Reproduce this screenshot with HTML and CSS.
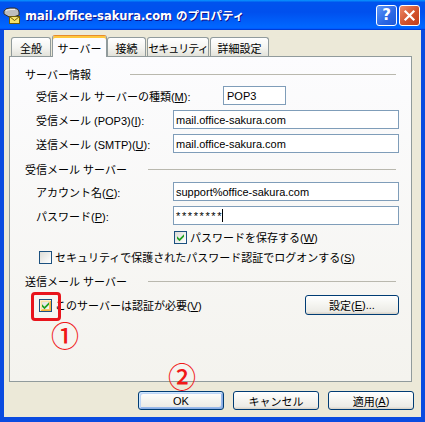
FILE: index.html
```html
<!DOCTYPE html>
<html lang="ja">
<head>
<meta charset="utf-8">
<title>mail.office-sakura.com のプロパティ</title>
<link rel="stylesheet" href="styles.css">
</head>
<body>
<div class="window">
  <div class="titlebar">
    <svg class="app-icon" viewBox="0 0 20 20" width="20" height="20">
      <path d="M1 9 L1 6 Q2 3 7 3 L12 3 Q16 4 16 7 L16 10 L8 13 Z" fill="#BDBDBD" stroke="#2E2E2E" stroke-width="1"/>
      <path d="M3 6 Q4 4.5 8 4.5 L12 4.5" fill="none" stroke="#F2F2F2" stroke-width="1"/>
      <rect x="6.5" y="11.5" width="10" height="7" fill="#F5E36B" stroke="#6B5A0A" stroke-width="1"/>
      <polyline points="6.5,11.5 11.5,15.5 16.5,11.5" fill="none" stroke="#6B5A0A" stroke-width="1"/>
    </svg>
    <span class="title">mail.office-sakura.com のプロパティ</span>
    <div class="tb-buttons">
      <span class="tb-btn help">?</span>
      <span class="tb-btn close">
        <svg viewBox="0 0 13 13" width="13" height="13"><path d="M2.5 2.5 L10.5 10.5 M10.5 2.5 L2.5 10.5" stroke="#fff" stroke-width="2.2" stroke-linecap="square"/></svg>
      </span>
    </div>
  </div>
  <div class="client">
    <div class="tabs">
      <div class="tab t-gen">全般</div>
      <div class="tab active t-srv">サーバー</div>
      <div class="tab t-con">接続</div>
      <div class="tab t-sec">セキュリティ</div>
      <div class="tab t-adv">詳細設定</div>
    </div>
    <div class="panel">
      <div class="group-head"><span class="gh-title w-info">サーバー情報</span><span class="gh-line"></span></div>
      <div class="field-row mt5"><span class="label wide">受信メール サーバーの種類(<u>M</u>):</span><span class="textbox short">POP3</span></div>
      <div class="field-row mt5"><span class="label">受信メール (POP3)(<u>I</u>):</span><span class="textbox">mail.office-sakura.com</span></div>
      <div class="field-row mt5"><span class="label">送信メール (SMTP)(<u>U</u>):</span><span class="textbox">mail.office-sakura.com</span></div>
      <div class="group-head mt9"><span class="gh-title w-sub">受信メール サーバー</span><span class="gh-line"></span></div>
      <div class="field-row mt6"><span class="label">アカウント名(<u>C</u>):</span><span class="textbox">support%office-sakura.com</span></div>
      <div class="field-row mt5"><span class="label">パスワード(<u>P</u>):</span><span class="textbox"><span class="pw">********</span><span class="caret"></span></span></div>
      <div class="check-row far mt5"><span class="checkbox"><svg viewBox="0 0 11 11" width="11" height="11"><path d="M2 4.2 L4.5 6.7 L9 2.2 L9 4.8 L4.5 9.3 L2 6.8 Z" fill="#21A121"/></svg></span><span>パスワードを保存する(<u>W</u>)</span></div>
      <div class="check-row mt6"><span class="checkbox"></span><span>セキュリティで保護されたパスワード認証でログオンする(<u>S</u>)</span></div>
      <div class="group-head mt10"><span class="gh-title w-sub">送信メール サーバー</span><span class="gh-line"></span></div>
      <div class="check-row tall mt7"><span class="checkbox hot"><svg viewBox="0 0 11 11" width="11" height="11"><path d="M2 4.2 L4.5 6.7 L9 2.2 L9 4.8 L4.5 9.3 L2 6.8 Z" fill="#21A121"/></svg></span><span>このサーバーは認証が必要(<u>V</u>)</span><span class="btn btn-settings">設定(<u>E</u>)...</span></div>
    </div>
    <div class="buttons">
      <span class="btn default">OK</span>
      <span class="btn">キャンセル</span>
      <span class="btn">適用(<u>A</u>)</span>
    </div>
  </div>
  <div class="mark-box"></div>
  <span class="mark n1">①</span>
  <span class="mark n2">②</span>
</div>
</body>
</html>
```

FILE: styles.css
```css
* { box-sizing: border-box; }
html, body { margin: 0; padding: 0; }
body {
  font-family: "Liberation Sans", "Noto Sans CJK JP", sans-serif;
  font-size: 11px;
  color: #000;
  background: #fff;
}
u { text-decoration: underline; text-underline-offset: 1px; }

.window {
  position: relative;
  width: 425px;
  height: 422px;
  background: #0A4BE0;
  display: flex;
  flex-direction: column;
  overflow: hidden;
}

.titlebar {
  height: 30px;
  flex: none;
  display: flex;
  align-items: center;
  padding: 0 5px 0 3px;
  background: linear-gradient(180deg, #0997ff, #0053ee 8%, #0050ee 40%, #06f 88%, #06f 93%, #005bff 95%, #003dd7 96%, #003dd7);
}
.app-icon { flex: none; display: block; }
.title {
  flex: 1;
  margin-left: 2px;
  font-family: "DejaVu Sans", "Noto Sans CJK JP", sans-serif;
  font-weight: bold;
  font-size: 11.5px;
  color: #fff;
  text-shadow: 1px 1px #0F1089;
  white-space: nowrap;
}
.tb-buttons { display: flex; gap: 2px; }
.tb-btn {
  width: 21px;
  height: 21px;
  border: 1px solid #fff;
  border-radius: 3px;
  display: flex;
  align-items: center;
  justify-content: center;
}
.help {
  background: linear-gradient(135deg, #5E98F9, #2A66E4 60%, #1F58D8);
  color: #fff;
  font-family: "DejaVu Sans", sans-serif;
  font-weight: bold;
  font-size: 15px;
  line-height: 1;
}
.close { background: linear-gradient(135deg, #EE8A68, #D2532E 55%, #C23C18); }
.close svg { display: block; }

.client {
  flex: 1;
  margin: 0 4px 5px 4px;
  background: #ECE9D8;
  padding: 5px 9px 0 5px;
  display: flex;
  flex-direction: column;
}

.tabs {
  flex: none;
  height: 21px;
  display: flex;
  align-items: flex-end;
  padding-left: 2px;
}
.tab {
  height: 19px;
  border: 1px solid #919B9C;
  border-bottom: none;
  border-radius: 3px 3px 0 0;
  background: linear-gradient(#FFFFFF, #F4F4F0 55%, #E2E2DA);
  display: flex;
  align-items: center;
  justify-content: center;
  white-space: nowrap;
  padding-top: 1px;
  overflow: hidden;
}
.tab.active {
  height: 22px;
  margin-bottom: -1px;
  position: relative;
  z-index: 1;
  background: #FCFCFE;
  border-top: 1px solid #E68B2C;
  box-shadow: inset 0 2px #FFC73C;
  padding-top: 2px;
}
.t-gen { width: 40px; margin-right: 1px; }
.t-srv { width: 55px; }
.t-con { width: 39px; margin-right: 1px; }
.t-sec { width: 62px; margin-right: 1px; letter-spacing: -1px; }
.t-adv { width: 59px; }

.panel {
  flex: none;
  height: 326px;
  border: 1px solid #919B9C;
  background: linear-gradient(#FCFCFE, #F4F3EE);
  padding: 10px 12px 0 15px;
  display: flex;
  flex-direction: column;
}

.mt5 { margin-top: 5px; }
.mt6 { margin-top: 6px; }
.mt7 { margin-top: 7px; }
.mt9 { margin-top: 9px; }
.mt10 { margin-top: 10px; }

.group-head {
  display: flex;
  align-items: center;
  height: 14px;
}
.gh-title { flex: none; white-space: nowrap; }
.w-info { width: 105px; }
.w-sub { width: 123px; }
.gh-line {
  flex: 1;
  height: 1px;
  background: #B9B8AE;
  margin-right: 3px;
}

.field-row {
  display: flex;
  align-items: center;
  height: 19px;
  padding-left: 11px;
}
.label { flex: none; width: 137px; white-space: nowrap; }
.label.wide { width: 187px; }
.textbox {
  flex: 1;
  height: 19px;
  border: 1px solid #7F9DB9;
  background: #fff;
  padding-left: 2px;
  display: flex;
  align-items: center;
  white-space: nowrap;
}
.textbox.short { flex: none; width: 63px; padding-left: 3px; }
.pw { letter-spacing: 1.6px; }
.caret {
  display: inline-block;
  width: 1px;
  height: 13px;
  background: #000;
  margin-left: -1px;
}

.check-row {
  display: flex;
  align-items: center;
  height: 14px;
  padding-left: 14px;
  white-space: nowrap;
}
.check-row.far { padding-left: 149px; }
.check-row.tall { height: 20px; }
.checkbox {
  flex: none;
  width: 13px;
  height: 13px;
  margin-right: 3px;
  border: 1px solid #1C5180;
  background: linear-gradient(135deg, #DCDCD7, #FFFFFF);
  display: flex;
  align-items: center;
  justify-content: center;
}
.checkbox svg { display: block; }
.checkbox.hot { box-shadow: inset 1px 1px #FFF0CF, inset -1px -1px #F8B33A, inset 2px 2px #FCE1A5, inset -2px -2px #F9C668; }

.btn {
  height: 20px;
  border: 1px solid #003C74;
  border-radius: 3px;
  background: linear-gradient(#FFFFFF, #F5F5F1 45%, #ECEBE6 86%, #D6D0C5);
  display: flex;
  align-items: center;
  justify-content: center;
  white-space: nowrap;
}
.btn-settings { margin-left: auto; width: 94px; }

.buttons {
  flex: none;
  display: flex;
  justify-content: flex-end;
  gap: 9px;
  margin-top: 9px;
  margin-right: -2px;
}
.buttons .btn { width: 86px; height: 19px; }
.btn.default {
  box-shadow: inset 1px 1px #CEE7FF, inset -1px -1px #89ADE4, inset 2px 2px #BCD4F6, inset -2px -2px #98B8EA;
}

.mark-box {
  position: absolute;
  left: 31px;
  top: 292px;
  width: 30px;
  height: 29px;
  border: 3px solid #E8141C;
  border-radius: 4px;
}
.mark {
  position: absolute;
  color: #F01818;
  font-family: "Noto Sans CJK JP", sans-serif;
  font-size: 28px;
  font-weight: 500;
  line-height: 1;
}
.n1 { left: 51px; top: 321px; }
.n2 { left: 168px; top: 362px; }
```
